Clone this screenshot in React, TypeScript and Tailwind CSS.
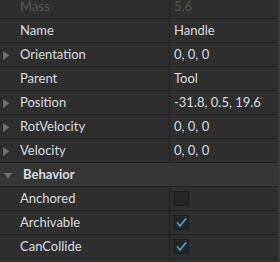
import type { ReactNode } from "react";

type Row = { label: string; value?: string; expand?: boolean; dim?: boolean; check?: boolean };

const rows: Row[] = [
  { label: "Name", value: "Handle" },
  { label: "Orientation", value: "0, 0, 0", expand: true },
  { label: "Parent", value: "Tool" },
  { label: "Position", value: "-31.8, 0.5, 19.6", expand: true },
  { label: "RotVelocity", value: "0, 0, 0", expand: true },
  { label: "Velocity", value: "0, 0, 0", expand: true },
];

const behavior: Row[] = [
  { label: "Anchored", check: false },
  { label: "Archivable", check: true },
  { label: "CanCollide", check: true },
];

function Arrow() {
  return (
    <svg width="7" height="9" viewBox="0 0 7 9" className="absolute left-[3px] top-[8px]">
      <path d="M0 0 L6.5 4.5 L0 9 Z" fill="#6f6f6f" />
    </svg>
  );
}

function Checkbox({ on }: { on: boolean }) {
  return (
    <span className="flex h-[15px] w-[15px] items-center justify-center border border-[#1c1c1c] bg-[#262626]">
      {on && (
        <svg width="13" height="13" viewBox="0 0 13 13">
          <path d="M2 6.5 L5 10 L11 2.5" fill="none" stroke="#3aa3f2" strokeWidth="1.7" />
        </svg>
      )}
    </span>
  );
}

function PropRow({ row, children }: { row: Row; children?: ReactNode }) {
  return (
    <div className="flex h-[24px] border-b border-[#212121]">
      <div className={`relative flex w-[170px] items-center border-r border-[#212121] pl-[20px] ${row.dim ? "text-[#585858]" : "text-[#d9dce0]"}`}>
        {row.expand && <Arrow />}
        {row.label}
      </div>
      <div className={`flex flex-1 items-center pl-[4px] ${row.dim ? "text-[#585858]" : "text-[#d9dce0]"}`}>
        {children ?? row.value}
      </div>
    </div>
  );
}

export default function App() {
  return (
    <div className="relative h-[262px] w-[280px] overflow-hidden bg-[#2e2e2e] text-[13px] font-['Lato',sans-serif]">
      <div className="-mt-[5px] pr-[2px]">
        <PropRow row={{ label: "Mass", value: "5.6", dim: true }} />
        {rows.map((r) => (
          <PropRow key={r.label} row={r} />
        ))}
        <div className="relative flex h-[24px] items-center border-b border-[#212121] bg-[#363636] pl-[23px] font-bold text-[#d9dce0]">
          <svg width="8" height="6" viewBox="0 0 8 6" className="absolute left-[4px] top-[10px]">
            <path d="M0 0 L8 0 L4 6 Z" fill="#6f6f6f" />
          </svg>
          Behavior
        </div>
        {behavior.map((r) => (
          <PropRow key={r.label} row={r}>
            <Checkbox on={!!r.check} />
          </PropRow>
        ))}
      </div>
      <div className="absolute right-0 top-0 h-full w-[2px] bg-[#3a3a3a]" />
    </div>
  );
}
